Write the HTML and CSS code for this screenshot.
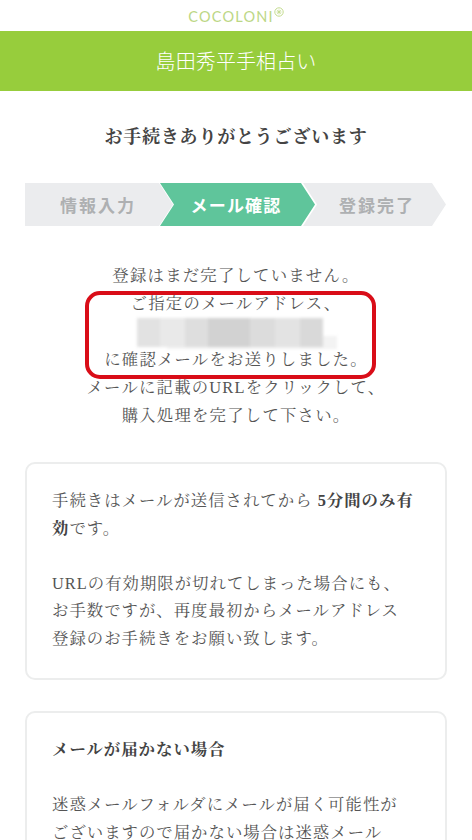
FILE: index.html
```html
<!DOCTYPE html>
<html lang="ja">
<head>
<meta charset="utf-8">
<title>島田秀平手相占い</title>
<link rel="stylesheet" href="styles.css">
</head>
<body>
<div class="logo-bar">
  <span class="logo">cocoLoni</span>
  <svg class="logo-mark" viewBox="0 0 10 10" width="10" height="10" aria-hidden="true">
    <circle cx="5" cy="5" r="4.2" fill="none" stroke="#c3db8e" stroke-width="1"/>
    <path d="M5 2.5v5M2.5 5h5M3.2 3.2l3.6 3.6M6.8 3.2 3.2 6.8" stroke="#c3db8e" stroke-width=".8"/>
  </svg>
</div>
<header class="banner">島田秀平手相占い</header>
<main class="content">
  <h1 class="title">お手続きありがとうございます</h1>
  <ol class="steps">
    <li class="step step-first">情報入力</li>
    <li class="step step-active">メール確認</li>
    <li class="step step-last">登録完了</li>
  </ol>
  <div class="notice">
    <p>登録はまだ完了していません。</p>
    <p>ご指定のメールアドレス、</p>
    <div class="mail-line"><span class="mask"></span></div>
    <p>に確認メールをお送りしました。</p>
    <p>メールに記載のURLをクリックして、</p>
    <p>購入処理を完了して下さい。</p>
    <div class="highlight"></div>
  </div>
  <section class="card">
    <p>手続きはメールが送信されてから <b>5分間のみ有効</b>です。</p>
    <p class="gap">URLの有効期限が切れてしまった場合にも、<br>お手数ですが、再度最初からメールアドレス<br>登録のお手続きをお願い致します。</p>
  </section>
  <section class="card">
    <p><b>メールが届かない場合</b></p>
    <p class="gap">迷惑メールフォルダにメールが届く可能性が<br>ございますので届かない場合は迷惑メール</p>
  </section>
</main>
</body>
</html>
```
FILE: styles.css
```css
* { box-sizing: border-box; }
html, body { margin: 0; padding: 0; }
body {
  width: 472px;
  height: 840px;
  overflow: hidden;
  background: #fff;
  color: #555;
  font-family: "Liberation Serif", "Noto Serif CJK JP", "Noto Sans CJK JP", serif;
}
.logo-bar {
  height: 31px;
  display: flex;
  justify-content: center;
  align-items: flex-start;
  padding-top: 7px;
}
.logo {
  font-family: "Lato", sans-serif;
  font-weight: 400;
  font-size: 14.5px;
  line-height: 18px;
  margin-top: 1px;
  letter-spacing: 1.2px;
  text-transform: uppercase;
  color: #bcd785;
}
.logo-mark { margin-top: 0; }
.banner {
  height: 60px;
  background: #97cd3c;
  color: #fff;
  text-align: center;
  font-family: "Noto Sans CJK JP", sans-serif;
  font-weight: 300;
  font-size: 20px;
  line-height: 60px;
  letter-spacing: .1px;
}
.content { padding: 0 25px; width: 472px; }
.title {
  margin: 31px 0 0;
  font-size: 18px;
  line-height: 30px;
  font-weight: 700;
  text-align: center;
  color: #444;
  letter-spacing: .8px;
}
.steps {
  list-style: none;
  margin: 31px 0 0;
  padding: 0;
  display: flex;
  height: 43px;
  font-family: "Noto Sans CJK JP", sans-serif;
  font-weight: 700;
  font-size: 17px;
  letter-spacing: 2px;
  line-height: 43px;
  color: #aeb0b2;
}
.step { background: #ebecee; text-align: center; }
.step-first {
  width: 148px;
  padding-right: 2px;
  clip-path: polygon(0 0, 134px 0, 148px 50%, 134px 100%, 0 100%);
}
.step-active {
  width: 155px;
  margin-left: -13px;
  padding-right: 3px;
  background: #5fc59b;
  color: #fff;
  letter-spacing: 1.2px;
  clip-path: polygon(0 0, 141px 0, 155px 50%, 141px 100%, 0 100%, 14px 50%);
}
.step-last {
  width: 143px;
  margin-left: -12px;
  padding-left: 5px;
  clip-path: polygon(0 0, 129px 0, 143px 50%, 129px 100%, 0 100%, 14px 50%);
}
.notice {
  position: relative;
  margin-top: 36px;
  text-align: center;
  font-size: 16.4px;
  line-height: 28px;
  letter-spacing: 1.2px;
  color: #555;
}
.notice p { margin: 0; }
.mail-line { height: 28px; display: flex; justify-content: flex-start; align-items: center; }
.mask {
  display: block;
  width: 186px;
  height: 29px;
  margin-left: 112px;
  background: linear-gradient(90deg,
    #e2e2e2 0, #e2e2e2 23px,
    #e9e9e9 23px, #e9e9e9 48px,
    #dedede 48px, #dedede 71px,
    #d2d2d2 71px, #d2d2d2 113px,
    #dcdcdc 113px, #dcdcdc 138px,
    #e3e3e3 138px, #e3e3e3 163px,
    #d9d9d9 163px, #d9d9d9 186px);
  box-shadow: 22px 10px 0 -8px #f3f3f3;
  filter: blur(1.5px);
}
.highlight {
  position: absolute;
  left: 60px;
  top: 29px;
  width: 291px;
  height: 88px;
  border: 4px solid #d90d18;
  border-radius: 15px;
}
.card {
  margin-top: 31px;
  padding: 23px 25px 26px;
  border: 2px solid #eceded;
  border-radius: 10px;
  font-size: 16.4px;
  line-height: 27.5px;
  letter-spacing: 1px;
  color: #555;
}
.notice + .card { margin-top: 32px; }
.card p { margin: 0; }
.card b { color: #444; }
.card .gap { margin-top: 27.5px; }
```
